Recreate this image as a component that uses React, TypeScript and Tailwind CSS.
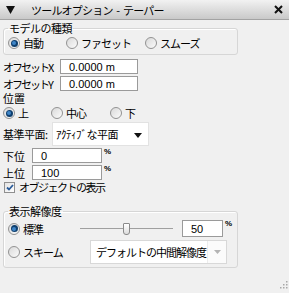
import React from "react";

const jp = "font-['MS_UI_Gothic','Noto_Sans_CJK_JP',sans-serif]";

const Radio = ({ checked }: { checked?: boolean }) => (
  <span className="flex h-[12px] w-[12px] shrink-0 items-center justify-center rounded-full border border-[#929292] bg-linear-to-br from-[#d9d9d9] to-[#fbfbfb]">
    {checked && (
      <span className="flex h-[7px] w-[7px] items-center justify-center rounded-full bg-[#0f3f6e]">
        <span className="h-[4px] w-[4px] rounded-full bg-[#3f86c8]" />
      </span>
    )}
  </span>
);

const RadioItem = ({ label, checked, className = "" }: { label: string; checked?: boolean; className?: string }) => (
  <div className={`flex items-center gap-[3px] whitespace-nowrap ${className}`}>
    <Radio checked={checked} />
    <span className="tracking-[-1px]">{label}</span>
  </div>
);

const Field = ({ value, className = "" }: { value: string; className?: string }) => (
  <div className={`flex h-[15px] items-center border border-[#9a9a9a] bg-white pl-[8px] font-['Liberation_Sans',sans-serif] text-[11px] ${className}`}>
    {value}
  </div>
);

const Pct = () => <span className="ml-[2px] self-start font-['Liberation_Sans',sans-serif] text-[8px] font-bold leading-[8px]">%</span>;

export default function App() {
  return (
    <div className={`relative h-[293px] w-[289px] overflow-hidden whitespace-nowrap bg-[#f0f0f0] text-[11px] leading-[12px] text-black ${jp}`}>
      {/* title */}
      <div className="flex h-[20px] items-center border-b border-[#a3a3a3] bg-linear-to-b from-[#f2f2f2] to-[#c9c9c9]">
        <svg width="9" height="8" viewBox="0 0 9 8" className="ml-[6px]">
          <polygon points="0,0 9,0 4.5,8" fill="#111" />
        </svg>
        <span className="ml-[16px] text-[11px] tracking-[-0.8px] [word-spacing:2px]">ツールオプション - テーパー</span>
        <svg width="9" height="9" viewBox="0 0 9 9" className="ml-auto mr-[6px]">
          <path d="M1 1 L8 8 M8 1 L1 8" stroke="#111" strokeWidth="2" />
        </svg>
      </div>

      <div className="px-[3px]">
        {/* model type */}
        <fieldset className="mt-[2px] w-[235px] rounded-[3px] border border-[#d6d6d6] pb-[4px] pl-[4px] shadow-[inset_1px_1px_0_#fff]">
          <legend className="px-[1px] tracking-[-0.5px]">モデルの種類</legend>
          <div className="mt-[2px] flex h-[14px] items-center">
            <RadioItem label="自動" checked className="w-[58px]" />
            <RadioItem label="ファセット" className="w-[79px]" />
            <RadioItem label="スムーズ" />
          </div>
        </fieldset>

        {/* offsets */}
        <div className="mt-[4px] flex flex-col gap-[2px]">
          <div className="flex items-center">
            <span className="w-[57px] tracking-[-2px]">オフセットX</span>
            <Field value="0.0000 m" className="w-[78px]" />
          </div>
          <div className="flex items-center">
            <span className="w-[57px] tracking-[-2px]">オフセットY</span>
            <Field value="0.0000 m" className="w-[78px]" />
          </div>
        </div>

        <div className="mt-[1px] h-[12px]">位置</div>
        <div className="mt-[2px] flex h-[14px] items-center">
          <RadioItem label="上" checked className="w-[48px]" />
          <RadioItem label="中心" className="w-[59px]" />
          <RadioItem label="下" />
        </div>

        {/* reference plane */}
        <div className="mt-[2px] flex items-center">
          <span className="w-[49px] tracking-[-0.5px]">基準平面:</span>
          <div className="flex h-[24px] w-[97px] items-center border border-[#e2e2e2] bg-white pl-[3px]">
            <span className="tracking-[-0.5px]">ｱｸﾃｨﾌﾞな平面</span>
            <svg width="8" height="5" viewBox="0 0 8 5" className="ml-auto mr-[6px] mt-[3px]">
              <polygon points="0,0 8,0 4,5" fill="#111" />
            </svg>
          </div>
        </div>

        {/* lower / upper */}
        <div className="mt-[2px] flex flex-col gap-[2px]">
          <div className="flex items-center">
            <span className="w-[29px]">下位</span>
            <Field value="0" className="w-[70px] pl-[3px]" />
            <Pct />
          </div>
          <div className="flex items-center">
            <span className="w-[29px]">上位</span>
            <Field value="100" className="w-[70px] pl-[3px]" />
            <Pct />
          </div>
        </div>

        <div className="mt-0 flex h-[14px] items-center gap-[4px] pl-[1px]">
          <span className="flex h-[11px] w-[11px] items-center justify-center border border-[#8f8f8f] bg-linear-to-br from-[#e4e4e4] to-white">
            <svg width="8" height="7" viewBox="0 0 8 7">
              <path d="M1 3.5 L3 5.5 L7 1" stroke="#2a5c9a" strokeWidth="1.8" fill="none" />
            </svg>
          </span>
          <span className="tracking-[-1.5px]">オブジェクトの表示</span>
        </div>

        {/* display resolution */}
        <fieldset className="mt-[11px] w-[235px] rounded-[3px] border border-[#d6d6d6] pb-[3px] pl-[4px] shadow-[inset_1px_1px_0_#fff]">
          <legend className="px-[1px] tracking-[-0.5px]">表示解像度</legend>
          <div className="mt-[3px] flex h-[17px] items-center">
            <RadioItem label="標準" checked className="w-[72px]" />
            <div className="relative flex h-[14px] w-[93px] items-center">
              <div className="h-[2px] w-full border-t border-[#a0a0a0] border-b-white" />
              <div className="absolute left-[43px] top-[1px] h-[12px] w-[7px] rounded-b-[3px] rounded-t-[1px] border border-[#8a8a8a] bg-linear-to-b from-white to-[#dcdcdc]" />
            </div>
            <Field value="50" className="ml-[9px] h-[17px] w-[41px] pl-[3px]" />
            <Pct />
          </div>
          <div className="mt-[3px] flex items-center">
            <RadioItem label="スキーム" className="w-[82px]" />
            <div className="flex h-[24px] w-[137px] items-center border border-[#d8d8d8] bg-white pl-[5px]">
              <span className="tracking-[-1px]">デフォルトの中間解像度</span>
              <div className="ml-auto flex h-full w-[19px] items-center justify-center border-l border-[#ececec] bg-[#fbfbfb]">
                <svg width="7" height="4" viewBox="0 0 7 4">
                  <polygon points="0,0 7,0 3.5,4" fill="#b4b4b4" />
                </svg>
              </div>
            </div>
          </div>
        </fieldset>
      </div>

      {/* resize grip */}
      <svg width="9" height="10" viewBox="0 0 9 10" className="absolute bottom-[3px] right-[1px]">
        {[
          [7, 1], [7, 4], [4, 4], [7, 7], [4, 7], [1, 7],
        ].map(([x, y], i) => (
          <rect key={i} x={x} y={y} width="1.5" height="1.5" fill="#a8a8a8" />
        ))}
      </svg>
    </div>
  );
}
